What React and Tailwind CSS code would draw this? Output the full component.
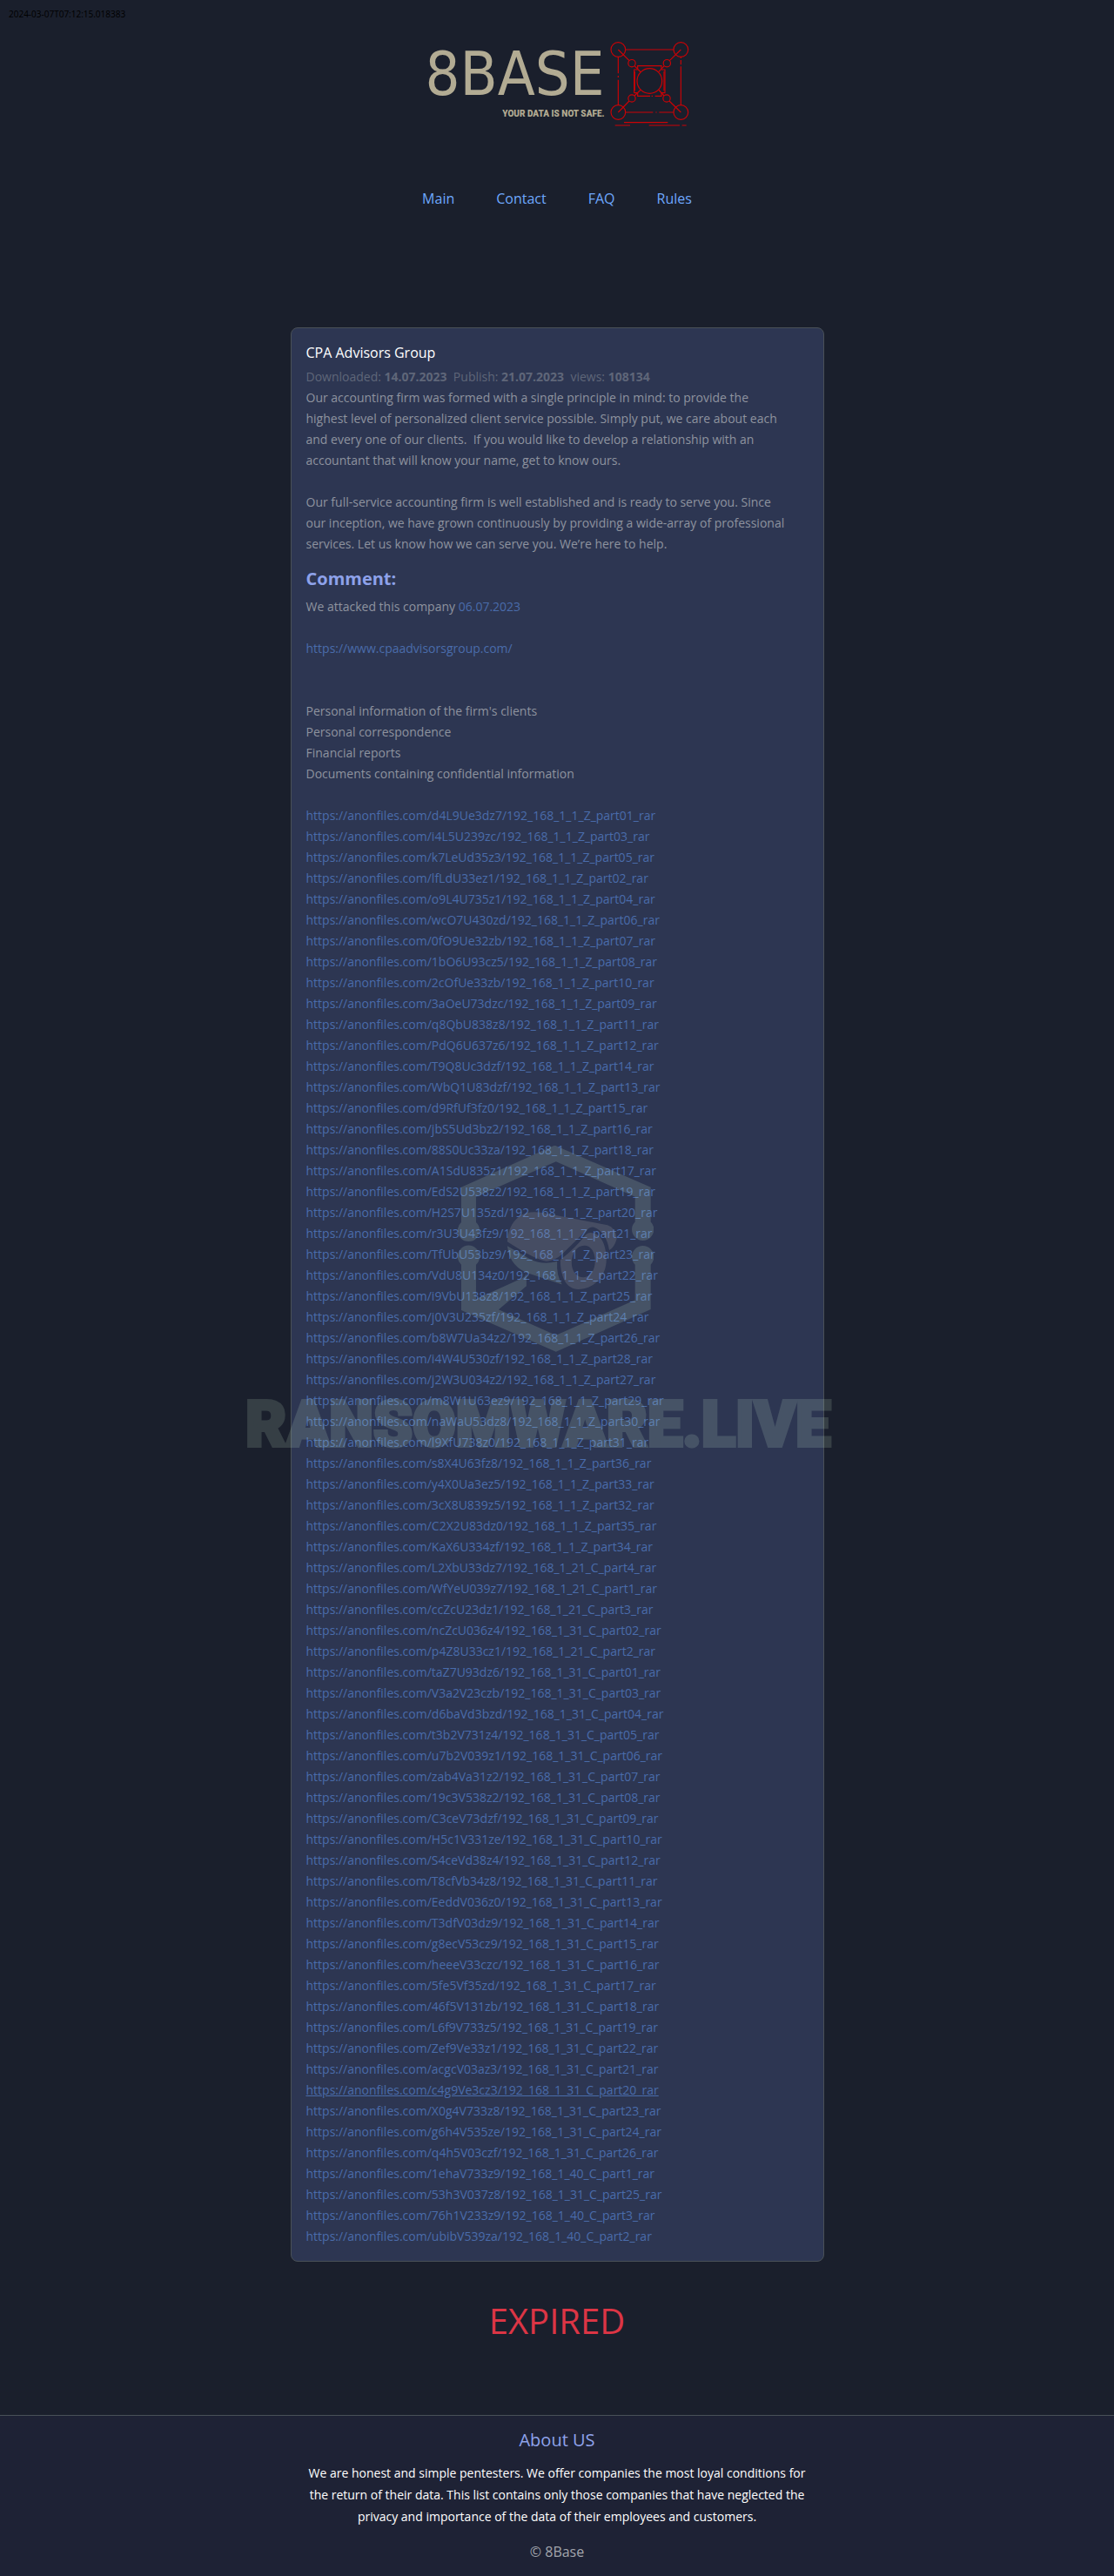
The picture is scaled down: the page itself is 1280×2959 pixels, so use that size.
const NAV_ITEMS = ["Main", "Contact", "FAQ", "Rules"];

const LEAKED_ITEMS = [
  "Personal information of the firm's clients",
  "Personal correspondence",
  "Financial reports",
  "Documents containing confidential information",
];

const FILES = [
  "d4L9Ue3dz7/192_168_1_1_Z_part01_rar",
  "i4L5U239zc/192_168_1_1_Z_part03_rar",
  "k7LeUd35z3/192_168_1_1_Z_part05_rar",
  "lfLdU33ez1/192_168_1_1_Z_part02_rar",
  "o9L4U735z1/192_168_1_1_Z_part04_rar",
  "wcO7U430zd/192_168_1_1_Z_part06_rar",
  "0fO9Ue32zb/192_168_1_1_Z_part07_rar",
  "1bO6U93cz5/192_168_1_1_Z_part08_rar",
  "2cOfUe33zb/192_168_1_1_Z_part10_rar",
  "3aOeU73dzc/192_168_1_1_Z_part09_rar",
  "q8QbU838z8/192_168_1_1_Z_part11_rar",
  "PdQ6U637z6/192_168_1_1_Z_part12_rar",
  "T9Q8Uc3dzf/192_168_1_1_Z_part14_rar",
  "WbQ1U83dzf/192_168_1_1_Z_part13_rar",
  "d9RfUf3fz0/192_168_1_1_Z_part15_rar",
  "jbS5Ud3bz2/192_168_1_1_Z_part16_rar",
  "88S0Uc33za/192_168_1_1_Z_part18_rar",
  "A1SdU835z1/192_168_1_1_Z_part17_rar",
  "EdS2U538z2/192_168_1_1_Z_part19_rar",
  "H2S7U135zd/192_168_1_1_Z_part20_rar",
  "r3U3U43fz9/192_168_1_1_Z_part21_rar",
  "TfUbU53bz9/192_168_1_1_Z_part23_rar",
  "VdU8U134z0/192_168_1_1_Z_part22_rar",
  "i9VbU138z8/192_168_1_1_Z_part25_rar",
  "j0V3U235zf/192_168_1_1_Z_part24_rar",
  "b8W7Ua34z2/192_168_1_1_Z_part26_rar",
  "i4W4U530zf/192_168_1_1_Z_part28_rar",
  "j2W3U034z2/192_168_1_1_Z_part27_rar",
  "m8W1U63ez9/192_168_1_1_Z_part29_rar",
  "naWaU53dz8/192_168_1_1_Z_part30_rar",
  "l9XfU738z0/192_168_1_1_Z_part31_rar",
  "s8X4U63fz8/192_168_1_1_Z_part36_rar",
  "y4X0Ua3ez5/192_168_1_1_Z_part33_rar",
  "3cX8U839z5/192_168_1_1_Z_part32_rar",
  "C2X2U83dz0/192_168_1_1_Z_part35_rar",
  "KaX6U334zf/192_168_1_1_Z_part34_rar",
  "L2XbU33dz7/192_168_1_21_C_part4_rar",
  "WfYeU039z7/192_168_1_21_C_part1_rar",
  "ccZcU23dz1/192_168_1_21_C_part3_rar",
  "ncZcU036z4/192_168_1_31_C_part02_rar",
  "p4Z8U33cz1/192_168_1_21_C_part2_rar",
  "taZ7U93dz6/192_168_1_31_C_part01_rar",
  "V3a2V23czb/192_168_1_31_C_part03_rar",
  "d6baVd3bzd/192_168_1_31_C_part04_rar",
  "t3b2V731z4/192_168_1_31_C_part05_rar",
  "u7b2V039z1/192_168_1_31_C_part06_rar",
  "zab4Va31z2/192_168_1_31_C_part07_rar",
  "19c3V538z2/192_168_1_31_C_part08_rar",
  "C3ceV73dzf/192_168_1_31_C_part09_rar",
  "H5c1V331ze/192_168_1_31_C_part10_rar",
  "S4ceVd38z4/192_168_1_31_C_part12_rar",
  "T8cfVb34z8/192_168_1_31_C_part11_rar",
  "EeddV036z0/192_168_1_31_C_part13_rar",
  "T3dfV03dz9/192_168_1_31_C_part14_rar",
  "g8ecV53cz9/192_168_1_31_C_part15_rar",
  "heeeV33czc/192_168_1_31_C_part16_rar",
  "5fe5Vf35zd/192_168_1_31_C_part17_rar",
  "46f5V131zb/192_168_1_31_C_part18_rar",
  "L6f9V733z5/192_168_1_31_C_part19_rar",
  "Zef9Ve33z1/192_168_1_31_C_part22_rar",
  "acgcV03az3/192_168_1_31_C_part21_rar",
  "c4g9Ve3cz3/192_168_1_31_C_part20_rar",
  "X0g4V733z8/192_168_1_31_C_part23_rar",
  "g6h4V535ze/192_168_1_31_C_part24_rar",
  "q4h5V03czf/192_168_1_31_C_part26_rar",
  "1ehaV733z9/192_168_1_40_C_part1_rar",
  "53h3V037z8/192_168_1_31_C_part25_rar",
  "76h1V233z9/192_168_1_40_C_part3_rar",
  "ubibV539za/192_168_1_40_C_part2_rar",
];

const ACTIVE_FILE = "c4g9Ve3cz3/192_168_1_31_C_part20_rar";

function CircuitMark() {
  return (
    <svg
      viewBox="688 50 273 294"
      className="h-[98px] w-[91px]"
      fill="none"
      stroke="#cb0306"
      strokeWidth="3.5"
      aria-hidden="true"
    >
      <circle cx="716" cy="80" r="25" />
      <circle cx="932" cy="80" r="25" />
      <circle cx="716" cy="296" r="25" />
      <circle cx="932" cy="296" r="25" />
      <circle cx="763" cy="127" r="12.5" />
      <circle cx="884" cy="127" r="12.5" />
      <circle cx="763" cy="248" r="12.5" />
      <circle cx="883" cy="248" r="12.5" />
      <circle cx="824" cy="188" r="43" />
      <path d="M741 80H907M741 296H836M845 296H849M857 296H907" />
      <path d="M716 105V162M716 170V176M716 184V271M932 105V110M932 116V132M932 138V271" />
      <path d="M716 80L754 118M772 136L794 158M932 80L893 118M875 136L855 157" />
      <path d="M716 296L754 257M772 239L794 218M932 296L892 257M874 239L855 218" />
      <path d="M783 146V136H865V146M771 229V149H783M865 149H877V229H865M783 230V240H826M831 240H835M843 240H865V230M771 229H783" />
      <path d="M773 155V222M874 155V222" />
      <path d="M736 331H887M705 341H757M822 341H928M936 341H951" />
    </svg>
  );
}

function Watermark() {
  return (
    <div className="pointer-events-none absolute inset-0 flex flex-col items-center justify-center overflow-hidden pt-[42px] pr-[3px]">
      <svg viewBox="78 78 676 711" className="h-[237px] w-[225px] opacity-15" fill="#d2f6d6" aria-hidden="true">
        <path d="M417 78L744 221V340A38 38 0 1 1 690 340V254L417 132L141 254V342A38 38 0 1 1 90 342V221L400 82Q417 74 417 78Z" />
        <path d="M90 488A38 38 0 1 1 141 488V607L300 535Q315 528 315 510V562L219 643L417 732L690 610V488A38 38 0 1 1 744 488V642L417 789L90 645Z" />
        <path d="M249 424L330 470Q370 490 421 477Q418 525 438 557L330 521Q258 500 249 424Z" />
        <path
          fill="#d2cfc2"
          d="M249 409Q252 350 290 322Q318 301 370 309L595 352Q622 360 627 398Q618 430 601 438Q590 375 548 359Q535 356 520 372L440 450Q415 474 386 476Q350 475 249 409Z"
        />
        <path
          fill="#d2cfc2"
          fillRule="evenodd"
          d="M536 378C575 378 591 425 591 471C591 530 545 573 494 573C452 573 432 530 432 472Q485 430 520 385Q528 378 536 378ZM515 422C488 422 471 450 471 482C471 512 490 532 512 532C536 532 552 508 552 475C552 445 538 422 515 422Z"
        />
      </svg>
      <p className="mt-[36px] mr-[40px] font-['Roboto',sans-serif] text-[72px] leading-[96px] font-black whitespace-nowrap text-[#d2f6d6] opacity-15 [-webkit-text-stroke:4px_#d2f6d6] [stroke-linejoin:round]">
        RANSOMWARE.LIVE
      </p>
    </div>
  );
}

export default function App() {
  return (
    <div className="relative min-h-screen bg-[#1a1f2c] font-['Open_Sans',sans-serif] text-base text-[#8e939f]">
      <time className="absolute top-2 left-2.5 text-[10px] leading-4 text-black">2024-03-07T07:12:15.018383</time>

      <header className="flex flex-col items-center pt-[47px]">
        <a href="#main" className="flex gap-1.5 text-[#b2ab93]">
          <span className="flex flex-col items-end">
            <span className="font-['DejaVu_Sans_Condensed','Roboto',sans-serif] text-[70px] leading-[76px]">8BASE</span>
            <span className="font-['Roboto',sans-serif] text-[10px] leading-4 font-black">YOUR DATA IS NOT SAFE.</span>
          </span>
          <CircuitMark />
        </a>
        <nav className="mt-[71px] flex gap-12">
          {NAV_ITEMS.map((item) => (
            <a key={item} href={`#${item.toLowerCase()}`} className="text-[#6ea8fe]">
              {item}
            </a>
          ))}
        </nav>
      </header>

      <main className="flex flex-col items-center pt-[136px]">
        <article className="w-full max-w-[613px] rounded-lg border border-[#495057] bg-[#2d3652] px-[17px] py-4 text-sm leading-6">
          <h1 className="text-base text-white">CPA Advisors Group</h1>
          <p className="mt-1 text-[#5f6679]">
            Downloaded: <b>14.07.2023</b>&nbsp; Publish: <b>21.07.2023</b>&nbsp; views: <b>108134</b>
          </p>
          <p>
            Our accounting firm was formed with a single principle in mind: to provide the
            <br />
            highest level of personalized client service possible. Simply put, we care about each
            <br />
            and every one of our clients.&nbsp; If you would like to develop a relationship with an
            <br />
            accountant that will know your name, get to know ours.
          </p>
          <p className="mt-6">
            Our full-service accounting firm is well established and is ready to serve you. Since
            <br />
            our inception, we have grown continuously by providing a wide-array of professional
            <br />
            services. Let us know how we can serve you. We’re here to help.
          </p>
          <h2 className="mt-3.5 text-xl leading-7 font-bold text-[#8ea2ea]">Comment:</h2>
          <p className="mt-1.5">
            We attacked this company <span className="text-[#4a6cab]">06.07.2023</span>
          </p>
          <p className="mt-6">
            <a href="https://www.cpaadvisorsgroup.com/" className="text-[#4a6cab]">
              https://www.cpaadvisorsgroup.com/
            </a>
          </p>
          <ul className="mt-12">
            {LEAKED_ITEMS.map((item) => (
              <li key={item}>{item}</li>
            ))}
          </ul>
          <ul className="mt-6 text-[#4a6cab]">
            {FILES.map((file) => (
              <li key={file}>
                <a href={`https://anonfiles.com/${file}`} className={file === ACTIVE_FILE ? "underline" : ""}>
                  https://anonfiles.com/{file}
                </a>
              </li>
            ))}
          </ul>
        </article>
        <p className="mt-11 text-[40px] leading-[48px] text-[#dc3545]">EXPIRED</p>
      </main>

      <footer className="mt-[84px] flex flex-col items-center border-t border-[#495057] bg-[#1e2235] pt-[13px] pb-4 text-center">
        <h2 className="text-xl leading-[30px] text-[#8ea2ea]">About US</h2>
        <p className="mt-2.5 max-w-[590px] text-sm leading-[25px] text-white">
          We are honest and simple pentesters. We offer companies the most loyal conditions for the return of their
          data. This list contains only those companies that have neglected the privacy and importance of the data
          of their employees and customers.
        </p>
        <p className="mt-4 text-[#a3a6ad]">© 8Base</p>
      </footer>

      <Watermark />
    </div>
  );
}
